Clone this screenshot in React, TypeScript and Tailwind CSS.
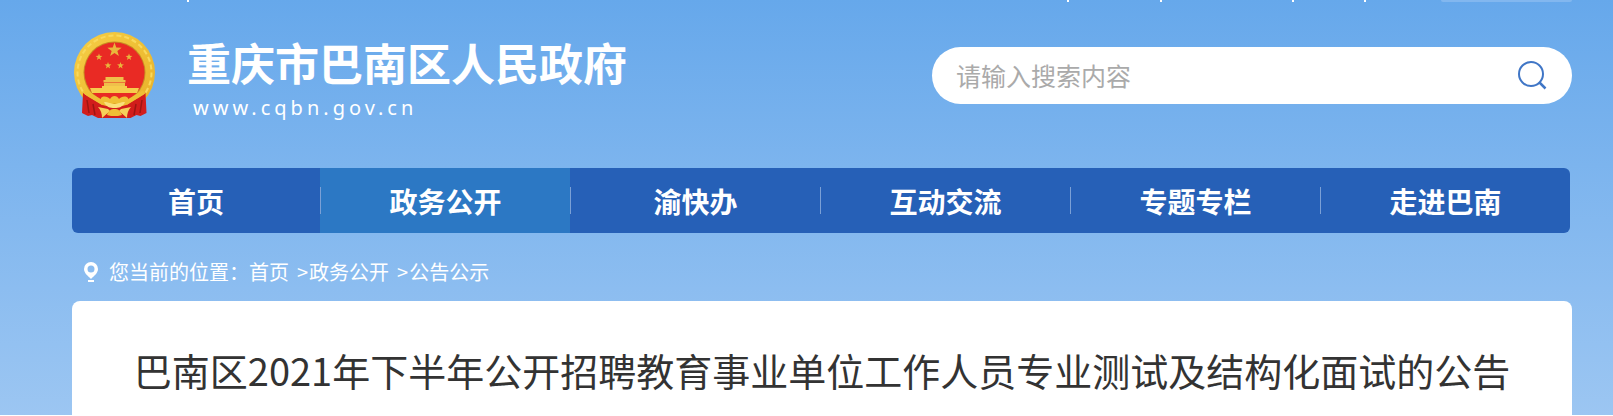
import React from "react";

const navItems = ["首页", "政务公开", "渝快办", "互动交流", "专题专栏", "走进巴南"];

function Star({ x, y, r }: { x: number; y: number; r: number }) {
  const points = Array.from({ length: 10 }, (_, i) => {
    const radius = i % 2 === 0 ? r : r * 0.4;
    const angle = (Math.PI / 5) * i - Math.PI / 2;
    return `${(x + radius * Math.cos(angle)).toFixed(2)},${(y + radius * Math.sin(angle)).toFixed(2)}`;
  }).join(" ");
  return <polygon points={points} fill="#e9b63c" />;
}

function Emblem() {
  return (
    <svg viewBox="0 0 81 86" className="h-[86px] w-[81px] shrink-0" aria-hidden="true">
      <defs>
        <linearGradient id="gold" x1="0" y1="0" x2="1" y2="1">
          <stop offset="0" stopColor="#f6cf48" />
          <stop offset="0.5" stopColor="#efbf35" />
          <stop offset="1" stopColor="#e8b02a" />
        </linearGradient>
      </defs>
      <circle cx="40.5" cy="40.5" r="40.5" fill="url(#gold)" />
      <circle cx="40.5" cy="40.5" r="37" fill="none" stroke="#f9d95c" strokeWidth="2" strokeDasharray="5 3" />
      <circle cx="40.5" cy="40.5" r="31" fill="#c98a22" />
      <circle cx="40.5" cy="40.5" r="30" fill="#e92a24" />
      <Star x={40.5} y={18} r={7.5} />
      <Star x={25} y={25} r={3.6} />
      <Star x={55} y={25} r={3.6} />
      <Star x={34} y={33.5} r={3.6} />
      <Star x={46.5} y={33.5} r={3.6} />
      <path d="M31.500 45h18v3h2v2.500h-22V48h2zM30 51h21v3H30z" fill="#efc04a" />
      <path d="M28 54h25v2h12l-2 5H18l-2-5h12z" fill="#f6cc4c" />
      <path d="M9 61c3 2 5 4 9 6l10 6 12.500 2 12-2 10-6c4-2 6-4 9-6l1 20-6 3-4-1-6 3H24l-6-3-4 1-6-3z" fill="#d21d1b" />
      <path d="M13 68l2 13M68 68l-2 13M19 72l2 11M62 72l-2 11" stroke="#9d1512" strokeWidth="1.500" fill="none" />
      <path d="M11 60c7 4 13 8 18 11M70 60c-7 4-13 8-18 11" stroke="#efbf35" strokeWidth="4" fill="none" />
      <path d="M27 66c3-3 7-1 9 1 2-4 7-4 9 0 2-2 6-4 9-1 1 4-2 8-7 8l-6.500-3-6.500 3c-5 0-8-4-7-8z" fill="#efbf35" />
      <path d="M30 70c5 0 7 2 10.500 2s5.500-2 10.500-2c-2 5-6 6-10.500 6S32 75 30 70z" fill="#fae07a" />
      <path d="M24 75l10 2 2 2-8 7c0-4-1-8-4-11zM57 75l-10 2-2 2 8 7c0-4 1-8 4-11z" fill="#f5d05a" />
      <path d="M33 83c2-5 4-6 7.500-6s5.500 1 7.500 6l-4 1h-7z" fill="#efbf35" />
    </svg>
  );
}

export default function App() {
  return (
    <div className="bg-linear-to-b from-[#66a8eb] to-[#9cc6f2] pr-[41px] pl-[72px] font-['Noto_Sans_CJK_SC','Noto_Sans',sans-serif]">
      <div className="flex h-0.5 items-stretch justify-between">
        <span className="ml-[115px] w-0.5 bg-white" />
        <div className="flex">
          <span className="mr-[91px] w-0.5 bg-white" />
          <span className="mr-[130px] w-0.5 bg-white" />
          <span className="mr-[70px] w-0.5 bg-white" />
          <span className="mr-[75px] w-0.5 bg-white" />
          <span className="w-[131px] rounded-b-sm bg-[#82b7ef]" />
        </div>
      </div>

      <header className="flex items-start justify-between pt-[30px]">
        <a href="#" className="flex gap-8 pl-0.5 text-white">
          <Emblem />
          <span className="flex flex-col">
            <span className="text-[44px] leading-[60px] font-bold">重庆市巴南区人民政府</span>
            <span className="pl-1.5 font-['Noto_Sans',sans-serif] text-[20px] leading-8 tracking-[4px]">www.cqbn.gov.cn</span>
          </span>
        </a>
        <form role="search" className="mt-[15px] flex h-[57px] w-[640px] items-center rounded-full bg-white px-6">
          <input
            type="search"
            aria-label="搜索"
            placeholder="请输入搜索内容"
            className="min-w-0 flex-1 bg-transparent text-[25px] text-[#333333] outline-none placeholder:text-[#aaaaaa]"
          />
          <button type="button" aria-label="搜索" className="text-[#4076c6]">
            <svg viewBox="0 0 30 30" className="size-[30px]" fill="none" stroke="currentColor" strokeWidth="2">
              <circle cx="13" cy="13" r="12" />
              <path d="M21.500 21.500l6 6" strokeWidth="2.500" />
            </svg>
          </button>
        </form>
      </header>

      <nav className="mt-11 mr-0.5 grid grid-cols-[248fr_repeat(5,250fr)] overflow-hidden rounded-md bg-[#2660b7]">
        {navItems.map((item, i) => (
          <a
            key={item}
            href="#"
            className={`flex h-[65px] items-center text-[28px] font-bold text-white ${i === 1 ? "bg-[#2c78c4]" : ""}`}
          >
            {i > 0 && <span className="h-[27px] w-px bg-[#7ba0d6]" />}
            <span className="flex-1 text-center">{item}</span>
          </a>
        ))}
      </nav>

      <div className="flex h-[68px] items-center pt-2.5 pl-3 text-[20px] text-white">
        <svg viewBox="0 0 14 20" className="mr-[11px] h-5 w-3.5" aria-hidden="true">
          <path fillRule="evenodd" fill="white" d="M7 0a7 7 0 0 1 7 7c0 4-4 7-7 10C4 14 0 11 0 7a7 7 0 0 1 7-7zm0 3.500a3.500 3.500 0 1 0 0 7 3.500 3.500 0 0 0 0-7z" />
          <path d="M4 19h6" stroke="white" strokeWidth="2" />
        </svg>
        <span>您当前的位置：</span>
        <div className="flex gap-2">
          <a href="#">首页</a>
          <span className="flex gap-px">
            <span>&gt;</span>
            <a href="#">政务公开</a>
          </span>
          <span className="flex gap-px">
            <span>&gt;</span>
            <a href="#">公告公示</a>
          </span>
        </div>
      </div>

      <main className="rounded-t-lg bg-white px-14 pt-10 pb-4">
        <h1 className="text-center text-[38px] leading-[58px] whitespace-nowrap text-[#333333]">
          巴南区2021年下半年公开招聘教育事业单位工作人员专业测试及结构化面试的公告
        </h1>
      </main>
    </div>
  );
}
